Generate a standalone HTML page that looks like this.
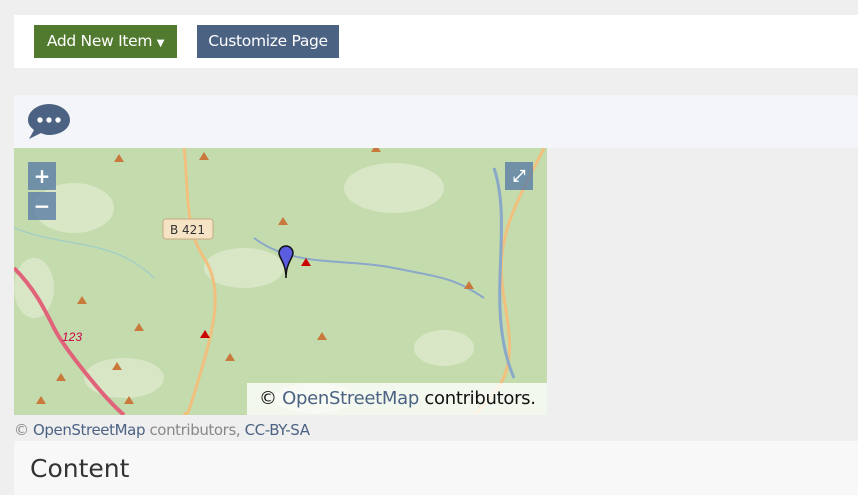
<!DOCTYPE html>
<html><head><meta charset="utf-8"><style>
body{margin:0;width:858px;height:495px;background:#efefef;font-family:"DejaVu Sans","Liberation Sans",sans-serif;overflow:hidden;position:relative}
.top{position:absolute;left:14px;top:15px;width:844px;height:53px;background:#fff}
.btn{position:absolute;top:25px;height:33px;color:#fff;font-size:15.5px;line-height:33px;text-align:center;letter-spacing:-0.3px;white-space:nowrap}
.b1{left:34px;width:143px;background:#527a2f}
.b2{left:197px;width:142px;background:#4b6283}
.hdr{position:absolute;left:14px;top:95px;width:844px;height:53px;background:#f4f5f9}
.map{position:absolute;left:14px;top:148px;width:533px;height:267px;background:#c3dbad;overflow:hidden}
.attr{position:absolute;left:247px;top:383px;width:300px;height:32px;background:rgba(255,255,255,.8);font-size:18px;line-height:32px;padding-left:12px;box-sizing:border-box;color:#111;white-space:nowrap;letter-spacing:-0.3px}
.blue{color:#4b6283}
.cap{position:absolute;left:14px;top:421px;font-size:15px;color:#888;letter-spacing:-0.4px;white-space:nowrap}
.content{position:absolute;left:14px;top:441px;width:844px;height:54px;background:#f8f8f8}
.content span{position:absolute;left:16px;top:13px;font-size:25px;color:#333}
.zb{position:absolute;width:28px;height:28px;background:rgba(90,125,165,.8);color:#fff;font-size:20px;font-weight:bold;text-align:center;line-height:28px}
</style></head><body>
<div class="top"></div>
<div class="btn b1">Add New Item <span style="font-size:10px">▼</span></div>
<div class="btn b2">Customize Page</div>
<div class="hdr"><svg style="position:absolute;left:13px;top:7px" width="44" height="38" viewBox="0 0 44 38"><path d="M22 2C33 2 43 9 43 18S33 33 22 33c-3 0-6-1-8-2L2 37 7 28C3 25 1 22 1 18 1 9 11 2 22 2z" fill="#4b6283"/><circle cx="13" cy="18" r="2.7" fill="#fff"/><circle cx="22" cy="18" r="2.7" fill="#fff"/><circle cx="31" cy="18" r="2.7" fill="#fff"/></svg></div>
<div class="map"><svg width="533" height="267">
<g fill="#e3ecd0" opacity=".7"><ellipse cx="60" cy="60" rx="40" ry="25"/><ellipse cx="380" cy="40" rx="50" ry="25"/><ellipse cx="230" cy="120" rx="40" ry="20"/><ellipse cx="110" cy="230" rx="40" ry="20"/><ellipse cx="300" cy="250" rx="40" ry="15"/><ellipse cx="430" cy="200" rx="30" ry="18"/><ellipse cx="20" cy="140" rx="20" ry="30"/></g>
<path d="M0 120 C20 140 30 160 40 180 S90 250 110 267" stroke="#e0637a" stroke-width="4" fill="none"/>
<path d="M170 0 C175 40 170 80 190 110 S200 180 185 230 S175 260 170 267" stroke="#f2c07e" stroke-width="3" fill="none"/>
<path d="M530 0 C500 60 480 90 490 150 S500 230 460 267" stroke="#f2c07e" stroke-width="3" fill="none"/>
<path d="M480 20 C500 80 470 160 500 230" stroke="#8aa8c8" stroke-width="3" fill="none"/>
<path d="M240 90 C280 120 330 110 380 120 S440 130 470 150" stroke="#8aa8c8" stroke-width="2" fill="none"/>
<path d="M0 80 C50 100 100 90 140 130" stroke="#9cc" stroke-width="1" fill="none"/>
<g fill="#c8793b"><path d="M100 14l5-8 5 8z"/><path d="M185 12l5-8 5 8z"/><path d="M264 77l5-8 5 8z"/><path d="M450 141l5-8 5 8z"/><path d="M303 192l5-8 5 8z"/><path d="M63 156l5-8 5 8z"/><path d="M120 183l5-8 5 8z"/><path d="M211 213l5-8 5 8z"/><path d="M42 233l5-8 5 8z"/><path d="M98 222l5-8 5 8z"/><path d="M22 256l5-8 5 8z"/><path d="M110 256l5-8 5 8z"/><path d="M357 4l5-8 5 8z"/></g>
<g fill="#c00"><path d="M287 118l5-8 5 8z"/><path d="M186 190l5-8 5 8z"/></g>
<rect x="149" y="71" width="50" height="20" rx="3" fill="#f6e2c4" stroke="#c9a880"/><text x="156" y="86" font-size="12" fill="#333" font-family="DejaVu Sans">B 421</text>
<text x="48" y="193" font-size="12" fill="#c04" font-style="italic" font-family="Liberation Sans">123</text>
<path d="M265 105a7 7 0 0 1 14 0c0 5-7 10-7 25c0-15-7-20-7-25z" fill="#5a5de0" stroke="#111" stroke-width="1.5"/>
</svg>
<div class="zb" style="left:14px;top:14px">+</div><div class="zb" style="left:14px;top:44px">−</div>
<div class="zb" style="left:491px;top:14px;font-size:16px">⤢</div>
</div>
<div class="attr">© <span class="blue">OpenStreetMap</span> contributors.</div>
<div class="cap">© <span class="blue">OpenStreetMap</span> contributors, <span class="blue">CC-BY-SA</span></div>
<div class="content"><span>Content</span></div>
</body></html>
